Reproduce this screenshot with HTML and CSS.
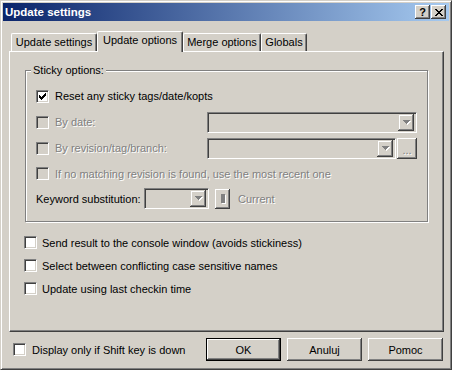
FILE: index.html
```html
<!DOCTYPE html>
<html>
<head>
<meta charset="utf-8"/>
<title>Update settings</title>
<link rel="stylesheet" href="styles.css">
</head>
<body>
<div class="Window">
    <div class="TitleBar">
        <span class="Caption">Update settings</span>
        <span class="CapBtn">?</span>
        <span class="CapBtn CloseBtn">
            <svg width="8" height="7" viewBox="0 0 8 7" shape-rendering="crispEdges"><path d="M0 0h2v1H0zM6 0h2v1H6zM1 1h2v1H1zM5 1h2v1H5zM2 2h4v1H2zM3 3h2v1H3zM2 4h4v1H2zM1 5h2v1H1zM5 5h2v1H5zM0 6h2v1H0zM6 6h2v1H6z" fill="#000"/></svg>
        </span>
    </div>

    <div class="Dialog">
        <div class="Tabs">
            <div class="Tab T1">Update settings</div>
            <div class="Tab Active T2">Update options</div>
            <div class="Tab T3">Merge options</div>
            <div class="Tab T4">Globals</div>
        </div>

        <div class="Panel">
            <fieldset class="Group">
                <legend>Sticky options:</legend>
                <div class="Row R26">
                    <span class="Check">
                        <svg width="11" height="11" viewBox="0 0 11 11" shape-rendering="crispEdges"><path d="M2 4h1v3H2zM3 5h1v3H3zM4 6h1v3H4zM5 5h1v3H5zM6 4h1v3H6zM7 3h1v3H7zM8 2h1v3H8z" fill="#000"/></svg>
                    </span>
                    <span>Reset any sticky tags/date/kopts</span>
                </div>
                <div class="Row R26 Disabled">
                    <span class="Check Off"></span>
                    <span>By date:</span>
                    <span class="Combo DateCombo"><span class="Drop"><svg width="8" height="5" viewBox="0 0 8 5" shape-rendering="crispEdges"><path d="M1 1h7v1H1zM2 2h5v1H2zM3 3h3v1H3zM4 4h1v1H4z" fill="#fff"/><path d="M0 0h7v1H0zM1 1h5v1H1zM2 2h3v1H2zM3 3h1v1H3z" fill="#808080"/></svg></span></span>
                </div>
                <div class="Row R26 Disabled">
                    <span class="Check Off"></span>
                    <span>By revision/tag/branch:</span>
                    <span class="Combo RevCombo"><span class="Drop"><svg width="8" height="5" viewBox="0 0 8 5" shape-rendering="crispEdges"><path d="M1 1h7v1H1zM2 2h5v1H2zM3 3h3v1H3zM4 4h1v1H4z" fill="#fff"/><path d="M0 0h7v1H0zM1 1h5v1H1zM2 2h3v1H2zM3 3h1v1H3z" fill="#808080"/></svg></span></span>
                    <span class="SmallBtn Browse">...</span>
                </div>
                <div class="Row R25 Disabled">
                    <span class="Check Off"></span>
                    <span>If no matching revision is found, use the most recent one</span>
                </div>
                <div class="Row R25">
                    <span class="KwLabel">Keyword substitution:</span>
                    <span class="Combo KwCombo"><span class="Drop"><svg width="8" height="5" viewBox="0 0 8 5" shape-rendering="crispEdges"><path d="M1 1h7v1H1zM2 2h5v1H2zM3 3h3v1H3zM4 4h1v1H4z" fill="#fff"/><path d="M0 0h7v1H0zM1 1h5v1H1zM2 2h3v1H2zM3 3h1v1H3z" fill="#808080"/></svg></span></span>
                    <span class="SmallBtn KwBtn"><span class="Bar"></span></span>
                    <span class="Disabled Current">Current</span>
                </div>
            </fieldset>

            <div class="Options">
                <div class="Row R23"><span class="Check"></span><span>Send result to the console window (avoids stickiness)</span></div>
                <div class="Row R23"><span class="Check"></span><span>Select between conflicting case sensitive names</span></div>
                <div class="Row R23"><span class="Check"></span><span>Update using last checkin time</span></div>
            </div>
        </div>

        <div class="Footer">
            <span class="Check"></span>
            <span>Display only if Shift key is down</span>
            <div class="Buttons">
                <span class="Btn Default">OK</span>
                <span class="Btn">Anuluj</span>
                <span class="Btn">Pomoc</span>
            </div>
        </div>
    </div>
</div>
</body>
</html>
```

FILE: styles.css
```css
body { margin: 0; background: #d4d0c8; font-family: "Liberation Sans", Arial, sans-serif; font-size: 11px; color: #000; }
.Window { box-sizing: border-box; width: 452px; height: 370px; padding: 1px; background: #d4d0c8; border: 1px solid; border-color: #d4d0c8 #404040 #404040 #d4d0c8; box-shadow: inset 1px 1px #fff, inset -1px -1px #808080; }

.TitleBar { display: flex; align-items: center; height: 18px; padding: 0 3px 0 2px; margin: 1px; background: linear-gradient(to right, #0a246a, #a6caf0); }
.Caption { flex: 1; color: #fff; font-weight: bold; font-size: 11.5px; }
.CapBtn { display: flex; align-items: center; justify-content: center; box-sizing: border-box; width: 15px; height: 14px; margin-left: 1px; background: #d4d0c8; font-weight: bold; font-size: 11px; line-height: 14px; box-shadow: inset -1px -1px #404040, inset 1px 1px #fff, inset -2px -2px #808080; }
.CloseBtn svg { display: block; }

.Dialog { padding: 9px 6px 0 7px; }
.Tabs { display: flex; align-items: flex-start; height: 20px; position: relative; z-index: 1; padding-left: 2px; }
.Tab { box-sizing: border-box; height: 18px; margin-top: 2px; line-height: 16px; text-align: center; background: #d4d0c8; border-top: 1px solid #fff; border-left: 1px solid #fff; border-right: 1px solid #404040; border-radius: 2px 2px 0 0; box-shadow: inset -1px 0 #808080; }
.Tab.Active { height: 21px; margin-top: 0; line-height: 16px; }
.T1 { width: 86px; }
.T2 { width: 86px; }
.T3 { width: 78px; }
.T4 { width: 46px; }

.Panel { box-sizing: border-box; height: 281px; padding: 12px 15px 0 15px; border: 1px solid; border-color: #fff #404040 #404040 #fff; box-shadow: inset -1px -1px #808080; }

.Group { margin: 0; padding: 6px 0 10px; min-width: 0; border: 1px solid #808080; box-shadow: inset 1px 1px #fff, 1px 1px #fff; }
.Group legend { margin-left: 5px; padding: 0 2px; line-height: 13px; background: #d4d0c8; }

.Row { display: flex; align-items: center; padding: 0 10px; white-space: nowrap; }
.R26 { height: 26px; }
.R25 { height: 25px; }
.R23 { height: 23px; }

.Check { box-sizing: border-box; flex: none; width: 13px; height: 13px; margin-right: 6px; background: #fff; border: 1px solid; border-color: #808080 #fff #fff #808080; box-shadow: inset 1px 1px #404040, inset -1px -1px #d4d0c8; }
.Check svg { display: block; }
.Check.Off { background: #d4d0c8; }

.Disabled { color: #808080; text-shadow: 1px 1px 0 #fff; }

.Combo { box-sizing: border-box; flex: none; display: flex; justify-content: flex-end; align-items: center; height: 21px; padding-right: 2px; background: #d4d0c8; border: 1px solid; border-color: #808080 #fff #fff #808080; box-shadow: inset 1px 1px #404040, inset -1px -1px #d4d0c8; }
.DateCombo { width: 210px; margin-left: auto; }
.RevCombo { width: 189px; margin-left: auto; }
.KwCombo { width: 65px; }
.Drop { display: flex; align-items: center; justify-content: center; box-sizing: border-box; width: 16px; height: 17px; padding-left: 1px; background: #d4d0c8; box-shadow: inset -1px -1px #404040, inset 1px 1px #d4d0c8, inset -2px -2px #808080, inset 2px 2px #fff; }
.Drop svg { display: block; }

.SmallBtn { box-sizing: border-box; flex: none; display: flex; align-items: center; justify-content: center; background: #d4d0c8; box-shadow: inset -1px -1px #404040, inset 1px 1px #fff, inset -2px -2px #808080; }
.Browse { width: 20px; height: 21px; margin-left: 1px; padding-top: 4px; color: #808080; text-shadow: 1px 1px 0 #fff; }
.KwBtn { width: 15px; height: 20px; margin-left: 6px; }
.Bar { width: 4px; height: 9px; background: #808080; box-shadow: 1px 1px #fff; }
.KwLabel { width: 108px; }
.Current { margin-left: 8px; }

.Options { margin: 9px 0 0 -11px; }
.Options .Check { margin-right: 5px; }

.Footer { display: flex; align-items: center; height: 23px; margin-top: 6px; padding-left: 4px; }
.Buttons { display: flex; margin-left: auto; margin-right: 1px; }
.Btn { box-sizing: border-box; display: flex; align-items: center; justify-content: center; width: 75px; height: 23px; margin-left: 6px; background: #d4d0c8; box-shadow: inset -1px -1px #404040, inset 1px 1px #fff, inset -2px -2px #808080; }
.Btn.Default { border: 1px solid #000; }
```
